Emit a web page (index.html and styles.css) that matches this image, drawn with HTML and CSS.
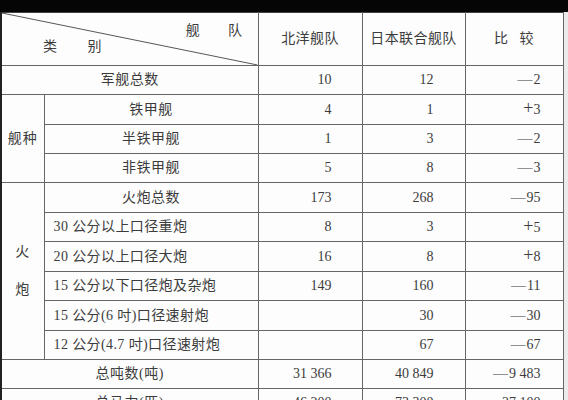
FILE: index.html
```html
<!DOCTYPE html>
<html lang="zh">
<head>
<meta charset="utf-8">
<title>北洋舰队与日本联合舰队比较</title>
<link rel="stylesheet" href="styles.css">
</head>
<body>
<div class="topbar"></div>
<table class="cmp">
  <colgroup>
    <col class="c-a"><col class="c-b"><col class="c-c"><col class="c-d"><col class="c-e">
  </colgroup>
  <tr class="head">
    <th colspan="2" class="diag">
      <svg class="diag-line" viewBox="0 0 258 52" preserveAspectRatio="none"><line x1="0" y1="0" x2="258" y2="52" stroke="#555" stroke-width="1"/></svg>
      <div class="diag-top"><span>舰</span><span>队</span></div>
      <div class="diag-bot"><span>类</span><span>别</span></div>
    </th>
    <th>北洋舰队</th>
    <th>日本联合舰队</th>
    <th><span class="pair"><span>比</span><span>较</span></span></th>
  </tr>
  <tr class="r29">
    <td colspan="2" class="lab">军舰总数</td>
    <td class="n n1">10</td><td class="n n2">12</td><td class="n n3"><span class="sg">—</span>2</td>
  </tr>
  <tr class="r30">
    <td rowspan="3" class="grp">舰种</td>
    <td class="lab">铁甲舰</td>
    <td class="n n1">4</td><td class="n n2">1</td><td class="n n3"><span class="sg plus">+</span>3</td>
  </tr>
  <tr class="r29">
    <td class="lab">半铁甲舰</td>
    <td class="n n1">1</td><td class="n n2">3</td><td class="n n3"><span class="sg">—</span>2</td>
  </tr>
  <tr class="r29">
    <td class="lab">非铁甲舰</td>
    <td class="n n1">5</td><td class="n n2">8</td><td class="n n3"><span class="sg">—</span>3</td>
  </tr>
  <tr class="r30">
    <td rowspan="6" class="grp"><div class="vert"><span>火</span><span>炮</span></div></td>
    <td class="lab">火炮总数</td>
    <td class="n n1">173</td><td class="n n2">268</td><td class="n n3"><span class="sg">—</span>95</td>
  </tr>
  <tr class="r29">
    <td class="lab left">30 公分以上口径重炮</td>
    <td class="n n1">8</td><td class="n n2">3</td><td class="n n3"><span class="sg plus">+</span>5</td>
  </tr>
  <tr class="r30">
    <td class="lab left">20 公分以上口径大炮</td>
    <td class="n n1">16</td><td class="n n2">8</td><td class="n n3"><span class="sg plus">+</span>8</td>
  </tr>
  <tr class="r29">
    <td class="lab left">15 公分以下口径炮及杂炮</td>
    <td class="n n1">149</td><td class="n n2">160</td><td class="n n3"><span class="sg">—</span>11</td>
  </tr>
  <tr class="r30">
    <td class="lab left">15 公分(6 吋)口径速射炮</td>
    <td class="n n1"></td><td class="n n2">30</td><td class="n n3"><span class="sg">—</span>30</td>
  </tr>
  <tr class="r29">
    <td class="lab left">12 公分(4.7 吋)口径速射炮</td>
    <td class="n n1"></td><td class="n n2">67</td><td class="n n3"><span class="sg">—</span>67</td>
  </tr>
  <tr class="r29">
    <td colspan="2" class="lab">总吨数(吨)</td>
    <td class="n n1">31 366</td><td class="n n2">40 849</td><td class="n n3"><span class="sg">—</span>9 483</td>
  </tr>
  <tr class="r29">
    <td colspan="2" class="lab">总马力(匹)</td>
    <td class="n n1">46 200</td><td class="n n2">73 300</td><td class="n n3"><span class="sg">—</span>27 100</td>
  </tr>
</table>
</body>
</html>
```

FILE: styles.css
```css
html, body {
  margin: 0;
  padding: 0;
}
body {
  background: #ebebeb;
  width: 568px;
  height: 400px;
  overflow: hidden;
  font-family: "Liberation Serif", "Noto Sans CJK SC", serif;
  font-size: 14px;
  color: #3c3c3c;
}
.topbar {
  height: 12px;
  background: #050505;
}
.cmp {
  width: 563px;
  table-layout: fixed;
  border-collapse: collapse;
  background: #fdfdfd;
  border-left: 2px solid #222;
  border-right: 1px solid #333;
}
.c-a { width: 43px; }
.c-b { width: 214px; }
.c-c { width: 104px; }
.c-d { width: 103px; }
.c-e { width: 98px; }
.cmp th, .cmp td {
  border: 1px solid #666;
  padding: 0;
  font-weight: normal;
  line-height: 16px;
}
.cmp tr:first-child th { border-top: 1px solid #444; }
.head { height: 52px; }
.cmp .head th { text-align: center; letter-spacing: 0.4px; }
.r29 { height: 29px; }
.r30 { height: 30px; }
.diag {
  position: relative;
  height: 52px;
}
.diag-line {
  position: absolute;
  left: 0;
  top: 0;
  width: 100%;
  height: 100%;
}
.diag-top {
  display: flex;
  justify-content: flex-end;
  gap: 28px;
  padding-right: 15px;
  margin-top: -1px;
}
.diag-bot {
  display: flex;
  justify-content: flex-start;
  gap: 30px;
  padding-left: 41px;
}
.pair {
  display: inline-flex;
  gap: 11px;
}
.cmp .lab {
  text-align: center;
  letter-spacing: 0.5px;
}
.cmp .lab.left {
  text-align: left;
  padding-left: 9px;
  letter-spacing: 0.4px;
}
.cmp .grp {
  text-align: center;
  letter-spacing: 1px;
}
.vert {
  display: flex;
  flex-direction: column;
  align-items: center;
  gap: 22px;
}
.cmp .n { text-align: right; }
.cmp .n1 { padding-right: 30px; }
.cmp .n2 { padding-right: 31px; }
.cmp .n3 { padding-right: 22px; }
.sg {
  display: inline-block;
  text-align: right;
  font-size: 15px;
  line-height: 14px;
  margin-right: 1px;
}
.sg.plus {
  font-size: 18px;
  margin-right: 0;
}
```
